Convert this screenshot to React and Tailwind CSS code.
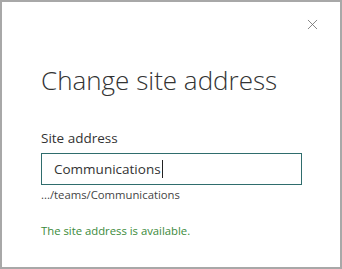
import { X } from 'lucide-react';

export default function App() {
  return (
    <div
      className="w-[342px] h-[269px] bg-white border-2 border-[#a8a8a8] flex flex-col"
      style={{ fontFamily: '"Open Sans", "Noto Sans", sans-serif' }}
    >
      {/* Header with close button */}
      <div className="flex justify-end pt-[14px] pr-[19px]">
        <button className="text-[#666] leading-none" aria-label="Close">
          <X className="w-[17px] h-[17px]" strokeWidth={1.1} />
        </button>
      </div>

      <div className="pl-[39px] pr-[40px] flex flex-col">
        <h1 className="mt-[29px] text-[26px] leading-[36px] font-light text-[#333]">Change site address</h1>

        <label className="mt-[30px] text-[13.5px] leading-[20px] text-[#333]">Site address</label>
        <div className="mt-[5px] w-[261px] h-[32px] border border-[#2f6d6d] flex items-center pl-[12px] text-[13.5px] text-[#333]">
          <span>Communications</span>
          <span className="w-px h-[18px] bg-[#222] ml-px" />
        </div>
        <div className="mt-[2px] text-[11.3px] leading-[16px] text-[#444]">.../teams/Communications</div>

        <div className="mt-[20px] text-[11.3px] leading-[16px] text-[#3a8a3a]">The site address is available.</div>
      </div>
    </div>
  );
}
